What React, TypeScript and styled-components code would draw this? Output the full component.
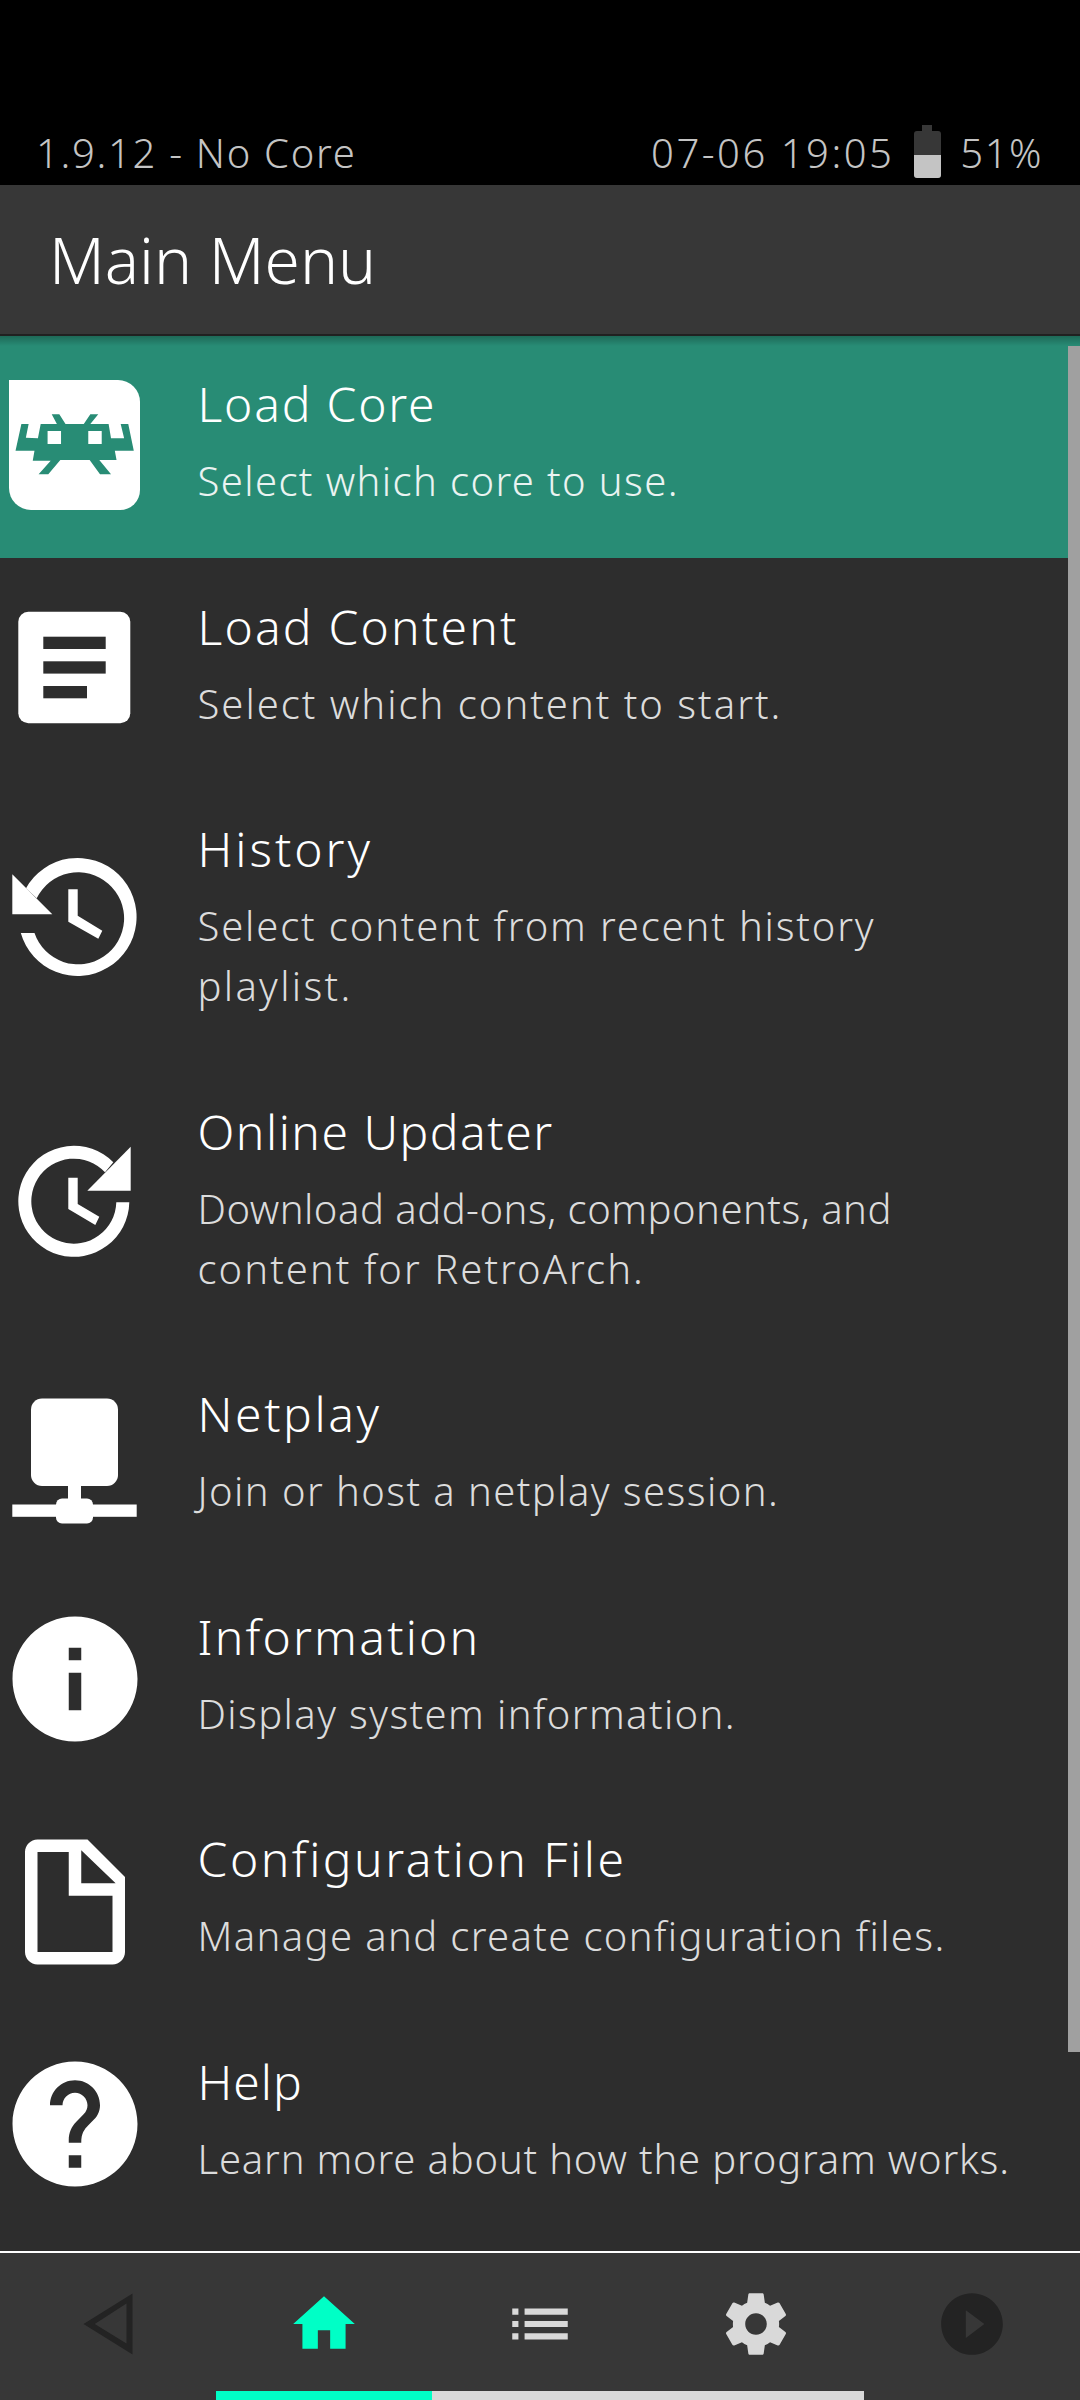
import React from "react";
import styled, { createGlobalStyle } from "styled-components";

const GlobalStyle = createGlobalStyle`
  html, body {
    margin: 0;
    padding: 0;
    background: #000;
  }
  body {
    font-family: "Noto Sans", "Open Sans", sans-serif;
    font-weight: 300;
  }
`;

const Screen = styled.div`
  width: 1080px;
  height: 2400px;
  display: flex;
  flex-direction: column;
  overflow: hidden;
`;

const StatusBar = styled.div`
  height: 185px;
  box-sizing: border-box;
  padding: 0 37px 7px 36px;
  background: #000;
  color: #c4c4c4;
  display: flex;
  align-items: flex-end;
  justify-content: space-between;
  font-size: 40px;
  line-height: 50px;
`;

const StatusText = styled.div<{ $track: number }>`
  letter-spacing: ${({ $track }) => $track}px;
`;

const StatusRight = styled.div`
  display: flex;
  align-items: flex-end;
`;

const Battery = styled.svg`
  width: 27px;
  height: 53px;
  margin: 0 19px 0 20px;
  flex: none;
`;

const Header = styled.div`
  height: 149px;
  box-sizing: border-box;
  padding: 0 0 1px 49px;
  background: #373737;
  color: #fff;
  display: flex;
  align-items: center;
  font-size: 64px;
  position: relative;
  z-index: 2;

  &::after {
    content: "";
    position: absolute;
    left: 0;
    right: 0;
    top: 100%;
    height: 12px;
    background: linear-gradient(rgba(0, 0, 0, 0.3), rgba(0, 0, 0, 0));
  }
`;

const List = styled.div`
  flex: 1;
  position: relative;
  background: #2d2d2d;
  padding-top: 1.5px;
`;

const Scrollbar = styled.div`
  position: absolute;
  right: 0;
  top: 12px;
  width: 12px;
  height: 1706px;
  background: #a0a0a0;
`;

const Row = styled.div<{ $active?: boolean }>`
  display: flex;
  align-items: center;
  background: ${({ $active }) => ($active ? "#288c75" : "transparent")};
`;

const IconSlot = styled.div`
  width: 150px;
  height: 150px;
  flex: none;
  margin-right: 47.5px;

  svg {
    display: block;
    width: 150px;
    height: 150px;
  }
`;

const RowText = styled.div`
  padding: 38.5px 0 47px;
`;

const Title = styled.div<{ $track: number }>`
  color: #fff;
  font-size: 48px;
  line-height: 60px;
  margin-bottom: 17px;
  letter-spacing: ${({ $track }) => $track}px;
`;

const Sublabel = styled.div<{ $active?: boolean; $track: number }>`
  color: ${({ $active }) => ($active ? "#eaf3f1" : "#dcdcdc")};
  font-size: 40px;
  line-height: 60px;
  white-space: nowrap;
  letter-spacing: ${({ $track }) => $track}px;
`;

const TabBar = styled.div`
  height: 149px;
  box-sizing: border-box;
  border-top: 2px solid #fff;
  background: #373737;
  display: flex;
  flex-direction: column;
`;

const Tabs = styled.div`
  flex: 1;
  display: flex;
  padding-top: 34px;
`;

const Tab = styled.div`
  flex: 1;
  display: flex;
  justify-content: center;
  align-items: flex-start;

  svg {
    display: block;
    width: 74px;
    height: 74px;
  }
`;

const Indicator = styled.div`
  height: 9px;
  margin: 0 216px;
  display: flex;
  background: #d9d9d9;
`;

const IndicatorActive = styled.div`
  width: 216px;
  background: #00ffc6;
`;

const CoreIcon = () => (
  <svg viewBox="0 0 150 150">
    <path
      fill="#fff"
      d="M9 8H118A22 22 0 0 1 140 30V118A20 20 0 0 1 120 138H31A22 22 0 0 1 9 116Z"
    />
    <g transform="scale(0.3448 0.3333) translate(0 -756)">
      <path
        fill="#288c75"
        d="M150 883H172L190 912H243L262 883H285L262 912H315L322 955H360L350 912H372L388 992H333L338 1020H288L322 1063H290L260 1020H175L140 1063H112L147 1022H95L100 992H45L62 912H83L75 953L110 955L118 912H165Z"
      />
      <rect x="138" y="933" width="39" height="39" fill="#fff" />
      <rect x="256" y="933" width="39" height="39" fill="#fff" />
    </g>
  </svg>
);

const ContentIcon = () => (
  <svg viewBox="0 0 150 150">
    <rect x="18.3" y="17.7" width="112" height="111.6" rx="10" fill="#fff" />
    <rect x="43.3" y="42.7" width="62.4" height="12.3" fill="#2d2d2d" />
    <rect x="43.3" y="67.3" width="62.4" height="12.3" fill="#2d2d2d" />
    <rect x="43.3" y="92" width="43.7" height="12.3" fill="#2d2d2d" />
  </svg>
);

const HistoryIcon = () => (
  <svg viewBox="0 0 150 150" fill="#fff">
    <path d="M20.8 86A59 59 0 1 0 26 41.3L36.7 51.3A46 46 0 1 1 34.5 86Z" />
    <path d="M12.3 27.3V67.3H52.3Z" />
    <path d="M68.3 42.3H77.7V68.7L102.3 83.7L98.3 91.7L68.3 74.7Z" />
  </svg>
);

const UpdaterIcon = () => (
  <svg viewBox="0 0 150 150" fill="#fff">
    <path d="M129.3 73.3A55.5 55.5 0 1 1 113.3 33.3L105 43.3A42.5 42.5 0 1 0 116.3 73.3Z" />
    <path d="M130.7 17.7V61.7H87.3Z" />
    <path d="M68.3 48.7H77.7V75L99.3 87.7L95.3 96L68.3 80Z" />
  </svg>
);

const NetplayIcon = () => (
  <svg viewBox="0 0 150 150" fill="#fff">
    <rect x="31" y="16.5" width="87" height="87.5" rx="11" />
    <rect x="68" y="100" width="13" height="20" />
    <rect x="12.3" y="122.5" width="124.4" height="12.3" />
    <rect x="56" y="116.5" width="37" height="25" rx="6" />
  </svg>
);

const InfoIcon = () => (
  <svg viewBox="0 0 24 24" fill="#fff">
    <path d="M12 2C6.48 2 2 6.48 2 12s4.48 10 10 10 10-4.48 10-10S17.52 2 12 2zm1 15h-2v-6h2v6zm0-8h-2V7h2v2z" />
  </svg>
);

const ConfigIcon = () => (
  <svg viewBox="0 0 24 24" fill="#fff">
    <path
      fillRule="evenodd"
      d="M14 2H6c-1.1 0-2 .9-2 2v16c0 1.1.9 2 2 2h12c1.1 0 2-.9 2-2V8zM6 4h5v7h7v9H6zM13 3.7L18.5 9H13z"
    />
  </svg>
);

const HelpIcon = () => (
  <svg viewBox="0 0 24 24" fill="#fff">
    <path d="M12 2C6.48 2 2 6.48 2 12s4.48 10 10 10 10-4.48 10-10S17.52 2 12 2zm1 17h-2v-2h2v2zm2.07-7.75l-.9.92C13.45 12.9 13 13.5 13 15h-2v-.5c0-1.1.45-2.1 1.17-2.83l1.24-1.26c.37-.36.59-.86.59-1.41 0-1.1-.9-2-2-2s-2 .9-2 2H8c0-2.21 1.79-4 4-4s4 1.79 4 4c0 .88-.36 1.68-.93 2.25z" />
  </svg>
);

// track = letter spacing per line, the original font runs wider than Noto Sans
const items = [
  { title: "Load Core", track: 1.8, lines: [["Select which core to use.", 1.4]], icon: <CoreIcon />, active: true },
  { title: "Load Content", track: 2.2, lines: [["Select which content to start.", 2]], icon: <ContentIcon /> },
  { title: "History", track: 3, lines: [["Select content from recent history", 1.85], ["playlist.", 2.3]], icon: <HistoryIcon /> },
  { title: "Online Updater", track: 1.5, lines: [["Download add-ons, components, and", 0.5], ["content for RetroArch.", 2.05]], icon: <UpdaterIcon /> },
  { title: "Netplay", track: 2.6, lines: [["Join or host a netplay session.", 1.43]], icon: <NetplayIcon /> },
  { title: "Information", track: 2.2, lines: [["Display system information.", 1.4]], icon: <InfoIcon /> },
  { title: "Configuration File", track: 2.5, lines: [["Manage and create configuration files.", 1.37]], icon: <ConfigIcon /> },
  { title: "Help", track: 1, lines: [["Learn more about how the program works.", 0.82]], icon: <HelpIcon /> },
] as { title: string; track: number; lines: [string, number][]; icon: React.ReactNode; active?: boolean }[];

export default function App() {
  return (
    <Screen>
      <GlobalStyle />
      <StatusBar>
        <StatusText $track={1.7}>1.9.12 - No Core</StatusText>
        <StatusRight>
          <StatusText $track={2.5}>07-06 19:05</StatusText>
          <Battery viewBox="0 0 27 53">
            <rect x="8" y="0" width="10" height="7" fill="#373737" />
            <rect x="0" y="6" width="27" height="47" rx="3" fill="#373737" />
            <path d="M0 30H27V50a3 3 0 0 1-3 3H3a3 3 0 0 1-3-3Z" fill="#c4c4c4" />
          </Battery>
          <StatusText $track={1.5}>51%</StatusText>
        </StatusRight>
      </StatusBar>
      <Header>Main Menu</Header>
      <List>
        {items.map(item => (
          <Row key={item.title} $active={item.active}>
            <IconSlot>{item.icon}</IconSlot>
            <RowText>
              <Title $track={item.track}>{item.title}</Title>
              {item.lines.map(([text, track]) => (
                <Sublabel key={text} $active={item.active} $track={track}>{text}</Sublabel>
              ))}
            </RowText>
          </Row>
        ))}
        <Scrollbar />
      </List>
      <TabBar>
        <Tabs>
          <Tab>
            <svg viewBox="0 0 74 74" fill="#232323">
              <path fillRule="evenodd" d="M12.5 37L61.5 6.5V67.5ZM23.8 37L55.5 56.5V16.5Z" />
            </svg>
          </Tab>
          <Tab>
            <svg viewBox="0 0 24 24" fill="#00ffc6">
              <path d="M10 20v-6h4v6h5v-8h3L12 3 2 12h3v8z" />
            </svg>
          </Tab>
          <Tab>
            <svg viewBox="0 0 24 24" fill="#d9d9d9">
              <path d="M3 13h2v-2H3v2zm0 4h2v-2H3v2zm0-8h2V7H3v2zm4 4h14v-2H7v2zm0 4h14v-2H7v2zM7 7v2h14V7H7z" />
            </svg>
          </Tab>
          <Tab>
            <svg viewBox="0 0 24 24" fill="#d9d9d9">
              <path d="M19.43 12.98c.04-.32.07-.64.07-.98s-.03-.66-.07-.98l2.11-1.65c.19-.15.24-.42.12-.64l-2-3.46c-.12-.22-.39-.3-.61-.22l-2.49 1c-.52-.4-1.08-.73-1.69-.98l-.38-2.65C14.46 2.18 14.25 2 14 2h-4c-.25 0-.46.18-.49.42l-.38 2.65c-.61.25-1.17.59-1.69.98l-2.49-1c-.23-.09-.49 0-.61.22l-2 3.46c-.13.22-.07.49.12.64l2.11 1.65c-.04.32-.07.65-.07.98s.03.66.07.98l-2.11 1.65c-.19.15-.24.42-.12.64l2 3.46c.12.22.39.3.61.22l2.49-1c.52.4 1.08.73 1.69.98l.38 2.65c.03.24.24.42.49.42h4c.25 0 .46-.18.49-.42l.38-2.65c.61-.25 1.17-.59 1.69-.98l2.49 1c.23.09.49 0 .61-.22l2-3.46c.12-.22.07-.49-.12-.64l-2.11-1.65zM12 15.5c-1.93 0-3.5-1.57-3.5-3.5s1.57-3.5 3.5-3.5 3.5 1.57 3.5 3.5-1.57 3.5-3.5 3.5z" />
            </svg>
          </Tab>
          <Tab>
            <svg viewBox="0 0 24 24" fill="#232323">
              <path d="M12 2C6.48 2 2 6.48 2 12s4.48 10 10 10 10-4.48 10-10S17.52 2 12 2zm-2 14.5v-9l6 4.5-6 4.5z" />
            </svg>
          </Tab>
        </Tabs>
        <Indicator>
          <IndicatorActive />
        </Indicator>
      </TabBar>
    </Screen>
  );
}
